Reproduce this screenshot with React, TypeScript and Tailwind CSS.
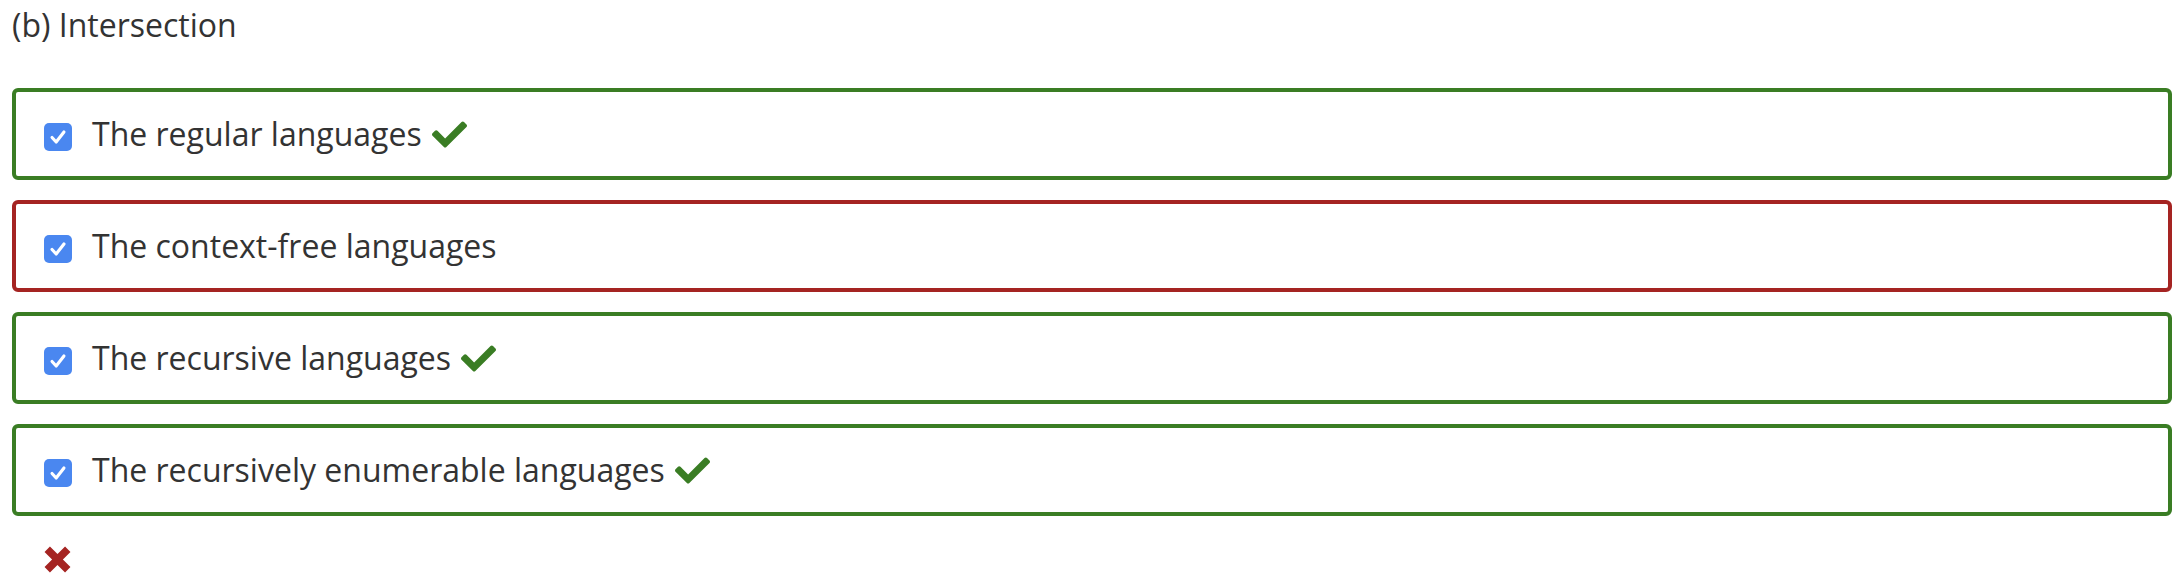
import React from "react";

const Check = () => (
  <svg viewBox="0 0 512 512" className="w-[35px] h-[35px] ml-[10px] fill-[#3a7d24]" aria-hidden>
    <path d="M173.9 439.4l-166.4-166.4c-10-10-10-26.2 0-36.2l36.2-36.2c10-10 26.2-10 36.2 0L192 312.7 432.1 72.6c10-10 26.2-10 36.2 0l36.2 36.2c10 10 10 26.2 0 36.2l-294.4 294.4c-10 10-26.2 10-36.2 0z" />
  </svg>
);

const Box = ({ checked }: { checked: boolean }) => (
  <div className="w-[28px] h-[28px] rounded-[5px] bg-[#4a87f0] flex items-center justify-center shrink-0 mt-[6px]">
    {checked && (
      <svg viewBox="0 0 24 24" className="w-[22px] h-[22px]" fill="none" stroke="white" strokeWidth={3.4} strokeLinecap="round" strokeLinejoin="round">
        <path d="M5.5 12.5l4.5 5L18.5 6.5" />
      </svg>
    )}
  </div>
);

const items = [
  { label: "The regular languages", ok: true },
  { label: "The context-free languages", ok: false },
  { label: "The recursive languages", ok: true },
  { label: "The recursively enumerable languages", ok: true },
];

export default function App() {
  return (
    <div className="bg-white w-[2184px] h-[588px] px-[12px] text-[#333333]" style={{ fontFamily: '"Open Sans", sans-serif' }}>
      <div className="text-[32px] leading-[44px] pt-[3px]">(b) Intersection</div>
      <div className="mt-[41px] flex flex-col gap-[20px] w-[2160px]">
        {items.map((it) => (
          <div
            key={it.label}
            className={`h-[92px] border-[4px] rounded-[6px] flex items-center pl-[28px] ${it.ok ? "border-[#3a7d24]" : "border-[#a52422]"}`}
          >
            <Box checked />
            <span className="ml-[20px] text-[32px] leading-[42px]">{it.label}</span>
            {it.ok && <Check />}
          </div>
        ))}
      </div>
      <div className="mt-[30px] pl-[32px]">
        <svg viewBox="0 0 100 100" className="w-[27px] h-[27px] fill-[#a52422]" aria-hidden>
          <path d="M22 2 L50 30 L78 2 L98 22 L70 50 L98 78 L78 98 L50 70 L22 98 L2 78 L30 50 L2 22 Z" />
        </svg>
      </div>
    </div>
  );
}
